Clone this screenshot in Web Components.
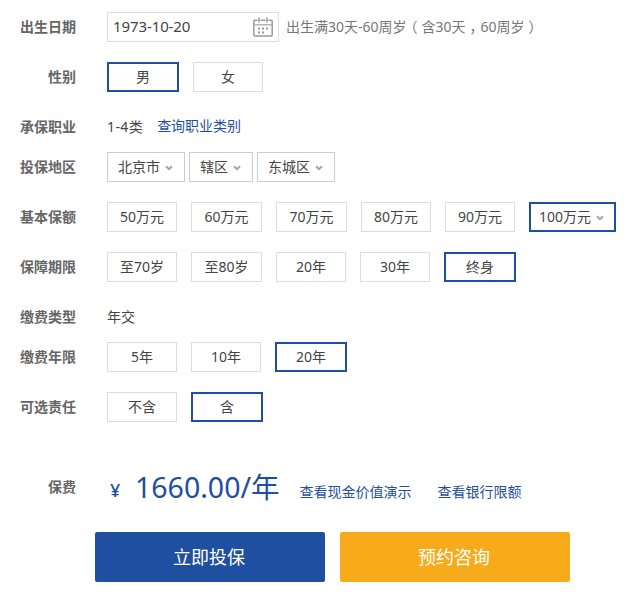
<!DOCTYPE html>
<html lang="zh">
<head>
<meta charset="utf-8">
<title>投保</title>
<style>
  html, body { margin: 0; background: #fff; }
  body {
    font-family: "Noto Sans", "Noto Sans CJK SC", sans-serif;
    font-size: 14px;
    color: #444;
  }
  /* fullwidth punctuation sits centred in a 15px cell in the hint line */
  .hint i { font-style: normal; font-feature-settings: "halt"; margin: 0 4px; }
</style>
</head>
<body>
<template id="form-row-tpl">
  <style>
    :host { display: grid; grid-template-columns: 76px 1fr; column-gap: 31px; align-items: center; min-height: 30px; margin-bottom: 20px; }
    :host([tight]) { margin-bottom: 10px; }
    .label { text-align: right; font-size: 14px; font-weight: 700; color: #666; white-space: nowrap; padding-bottom: 2px; }
    .body { display: flex; align-items: center; gap: 14px; white-space: nowrap; }
    :host([narrow]) .body { gap: 4px; }
    ::slotted(span) { padding-bottom: 2px; }
  </style>
  <div class="label"></div>
  <div class="body"><slot></slot></div>
</template>

<script>
  const chevron = `<svg width="8" height="6" viewBox="0 0 8 6"><path d="M1 1.200 4 4.200 7 1.200" fill="none" stroke="#a5a5a5" stroke-width="2"/></svg>`;

  class FormRow extends HTMLElement {
    constructor() {
      super();
      this.attachShadow({ mode: "open" });
      this.shadowRoot.appendChild(document.getElementById("form-row-tpl").content.cloneNode(true));
    }
    connectedCallback() {
      this.shadowRoot.querySelector(".label").textContent = this.getAttribute("label");
    }
  }

  class OptBtn extends HTMLElement {
    constructor() {
      super();
      this.attachShadow({ mode: "open" });
      this.shadowRoot.innerHTML = `
      <style>
        :host { display: inline-flex; box-sizing: border-box; height: 30px; width: 70px; padding-bottom: 2px; align-items: center; justify-content: center; gap: 5px; border: 1px solid #ddd; background: #fff; color: #444; font-size: 14px; }
        :host([selected]) { border: 2px solid #1f4fa0; }
        svg { display: none; }
        :host([more]) { padding-right: 2px; }
        :host([more]) svg { display: block; margin-top: 4px; }
      </style>
      <slot></slot>${chevron}`;
    }
    connectedCallback() {
      if (this.hasAttribute("w")) this.style.width = this.getAttribute("w") + "px";
    }
  }

  class AreaSelect extends HTMLElement {
    constructor() {
      super();
      this.attachShadow({ mode: "open" });
      this.shadowRoot.innerHTML = `
      <style>
        :host { display: inline-flex; box-sizing: border-box; height: 30px; padding: 0 1px 2px 0; align-items: center; justify-content: center; gap: 5px; border: 1px solid #ccc; color: #444; font-size: 14px; }
        svg { margin-top: 4px; }
      </style>
      <slot></slot>${chevron}`;
    }
    connectedCallback() {
      this.style.width = this.getAttribute("w") + "px";
    }
  }

  class DateField extends HTMLElement {
    constructor() {
      super();
      this.attachShadow({ mode: "open" });
      this.shadowRoot.innerHTML = `
      <style>
        :host { display: inline-flex; box-sizing: border-box; width: 172px; height: 30px; align-items: center; justify-content: space-between; padding: 0 5px; border: 1px solid #ddd; color: #444; font-size: 15px; letter-spacing: -.1px; }
        .txt { padding-bottom: 2px; }
      </style>
      <span class="txt"><slot></slot></span>
      <svg width="20" height="20" viewBox="0 0 20 20" fill="none" stroke="#999" stroke-width="1.500">
        <path d="M4.500 3.300H2a1.200 1.200 0 0 0-1.200 1.200v13.300A1.200 1.200 0 0 0 2 19h16a1.200 1.200 0 0 0 1.200-1.200V4.500A1.200 1.200 0 0 0 18 3.300h-2.500M7.500 3.300h5"/>
        <path d="M6 .5v5M14 .5v5"/>
        <path d="M.8 7.800h18.400" stroke="#b5b5b5"/>
        <path d="M5 10.500h2v2H5zM9 10.500h2v2H9zM13 10.500h2v2h-2zM5 14.500h2v2H5zM9 14.500h2v2H9z" fill="#999" stroke="none"/>
      </svg>`;
    }
  }

  class TextLink extends HTMLElement {
    constructor() {
      super();
      this.attachShadow({ mode: "open" });
      this.shadowRoot.innerHTML = `
      <style>:host { display: inline-block; color: #1f4fa0; font-size: 14px; line-height: 20px; padding-bottom: 2px; cursor: pointer; }</style>
      <slot></slot>`;
    }
  }

  class PriceTag extends HTMLElement {
    constructor() {
      super();
      this.attachShadow({ mode: "open" });
      this.shadowRoot.innerHTML = `
      <style>
        :host { display: inline-flex; align-items: center; height: 30px; color: #1f4fa0; font-size: 28.500px; line-height: 30px; }
        .cur { font-size: 18px; line-height: 20px; width: 28px; margin-top: 6px; padding-left: 3px; box-sizing: border-box; font-weight: 500; }
      </style>
      <span class="cur">¥</span><slot></slot>`;
    }
  }

  class ActionBtn extends HTMLElement {
    constructor() {
      super();
      this.attachShadow({ mode: "open" });
      this.shadowRoot.innerHTML = `
      <style>
        :host { display: flex; box-sizing: border-box; width: 230px; height: 50px; padding: 0 2px 2px 0; align-items: center; justify-content: center; border-radius: 2px; background: #1f4fa0; color: #fff; font-size: 18px; cursor: pointer; }
        :host([tone="amber"]) { background: #f7ab1b; }
      </style>
      <slot></slot>`;
    }
  }

  class PolicyForm extends HTMLElement {
    constructor() {
      super();
      this.attachShadow({ mode: "open" });
      this.shadowRoot.innerHTML = `
      <style>
        :host { display: block; padding-top: 12px; }
        .actions { display: flex; gap: 15px; margin: 30px 0 0 95px; }
      </style>
      <slot></slot>
      <div class="actions"><slot name="actions"></slot></div>`;
    }
  }

  customElements.define("form-row", FormRow);
  customElements.define("opt-btn", OptBtn);
  customElements.define("area-select", AreaSelect);
  customElements.define("date-field", DateField);
  customElements.define("text-link", TextLink);
  customElements.define("price-tag", PriceTag);
  customElements.define("action-btn", ActionBtn);
  customElements.define("policy-form", PolicyForm);
</script>

<policy-form>
  <form-row label="出生日期">
    <date-field>1973-10-20</date-field>
    <span class="hint" style="margin-left:-7px;color:#777">出生满30天-60周岁<i>（</i>含30天<i>，</i>60周岁<i>）</i></span>
  </form-row>
  <form-row label="性别">
    <opt-btn w="72" selected>男</opt-btn>
    <opt-btn>女</opt-btn>
  </form-row>
  <form-row label="承保职业" tight>
    <span style="letter-spacing:.4px">1-4类</span>
    <text-link>查询职业类别</text-link>
  </form-row>
  <form-row label="投保地区" narrow>
    <area-select w="78">北京市</area-select>
    <area-select w="64">辖区</area-select>
    <area-select w="78">东城区</area-select>
  </form-row>
  <form-row label="基本保额">
    <opt-btn>50万元</opt-btn>
    <opt-btn w="71">60万元</opt-btn>
    <opt-btn w="71">70万元</opt-btn>
    <opt-btn>80万元</opt-btn>
    <opt-btn>90万元</opt-btn>
    <opt-btn w="87" selected more>100万元</opt-btn>
  </form-row>
  <form-row label="保障期限">
    <opt-btn>至70岁</opt-btn>
    <opt-btn w="71">至80岁</opt-btn>
    <opt-btn>20年</opt-btn>
    <opt-btn>30年</opt-btn>
    <opt-btn w="72" selected>终身</opt-btn>
  </form-row>
  <form-row label="缴费类型" tight>
    <span>年交</span>
  </form-row>
  <form-row label="缴费年限">
    <opt-btn>5年</opt-btn>
    <opt-btn>10年</opt-btn>
    <opt-btn w="72" selected>20年</opt-btn>
  </form-row>
  <form-row label="可选责任" style="margin-bottom:50px">
    <opt-btn>不含</opt-btn>
    <opt-btn w="72" selected>含</opt-btn>
  </form-row>
  <form-row label="保费" style="margin-bottom:0">
    <price-tag>1660.00/年</price-tag>
    <text-link style="margin:10px 0 0 6px;padding:0">查看现金价值演示</text-link>
    <text-link style="margin:10px 0 0 12px;padding:0">查看银行限额</text-link>
  </form-row>
  <action-btn slot="actions">立即投保</action-btn>
  <action-btn slot="actions" tone="amber">预约咨询</action-btn>
</policy-form>
</body>
</html>
